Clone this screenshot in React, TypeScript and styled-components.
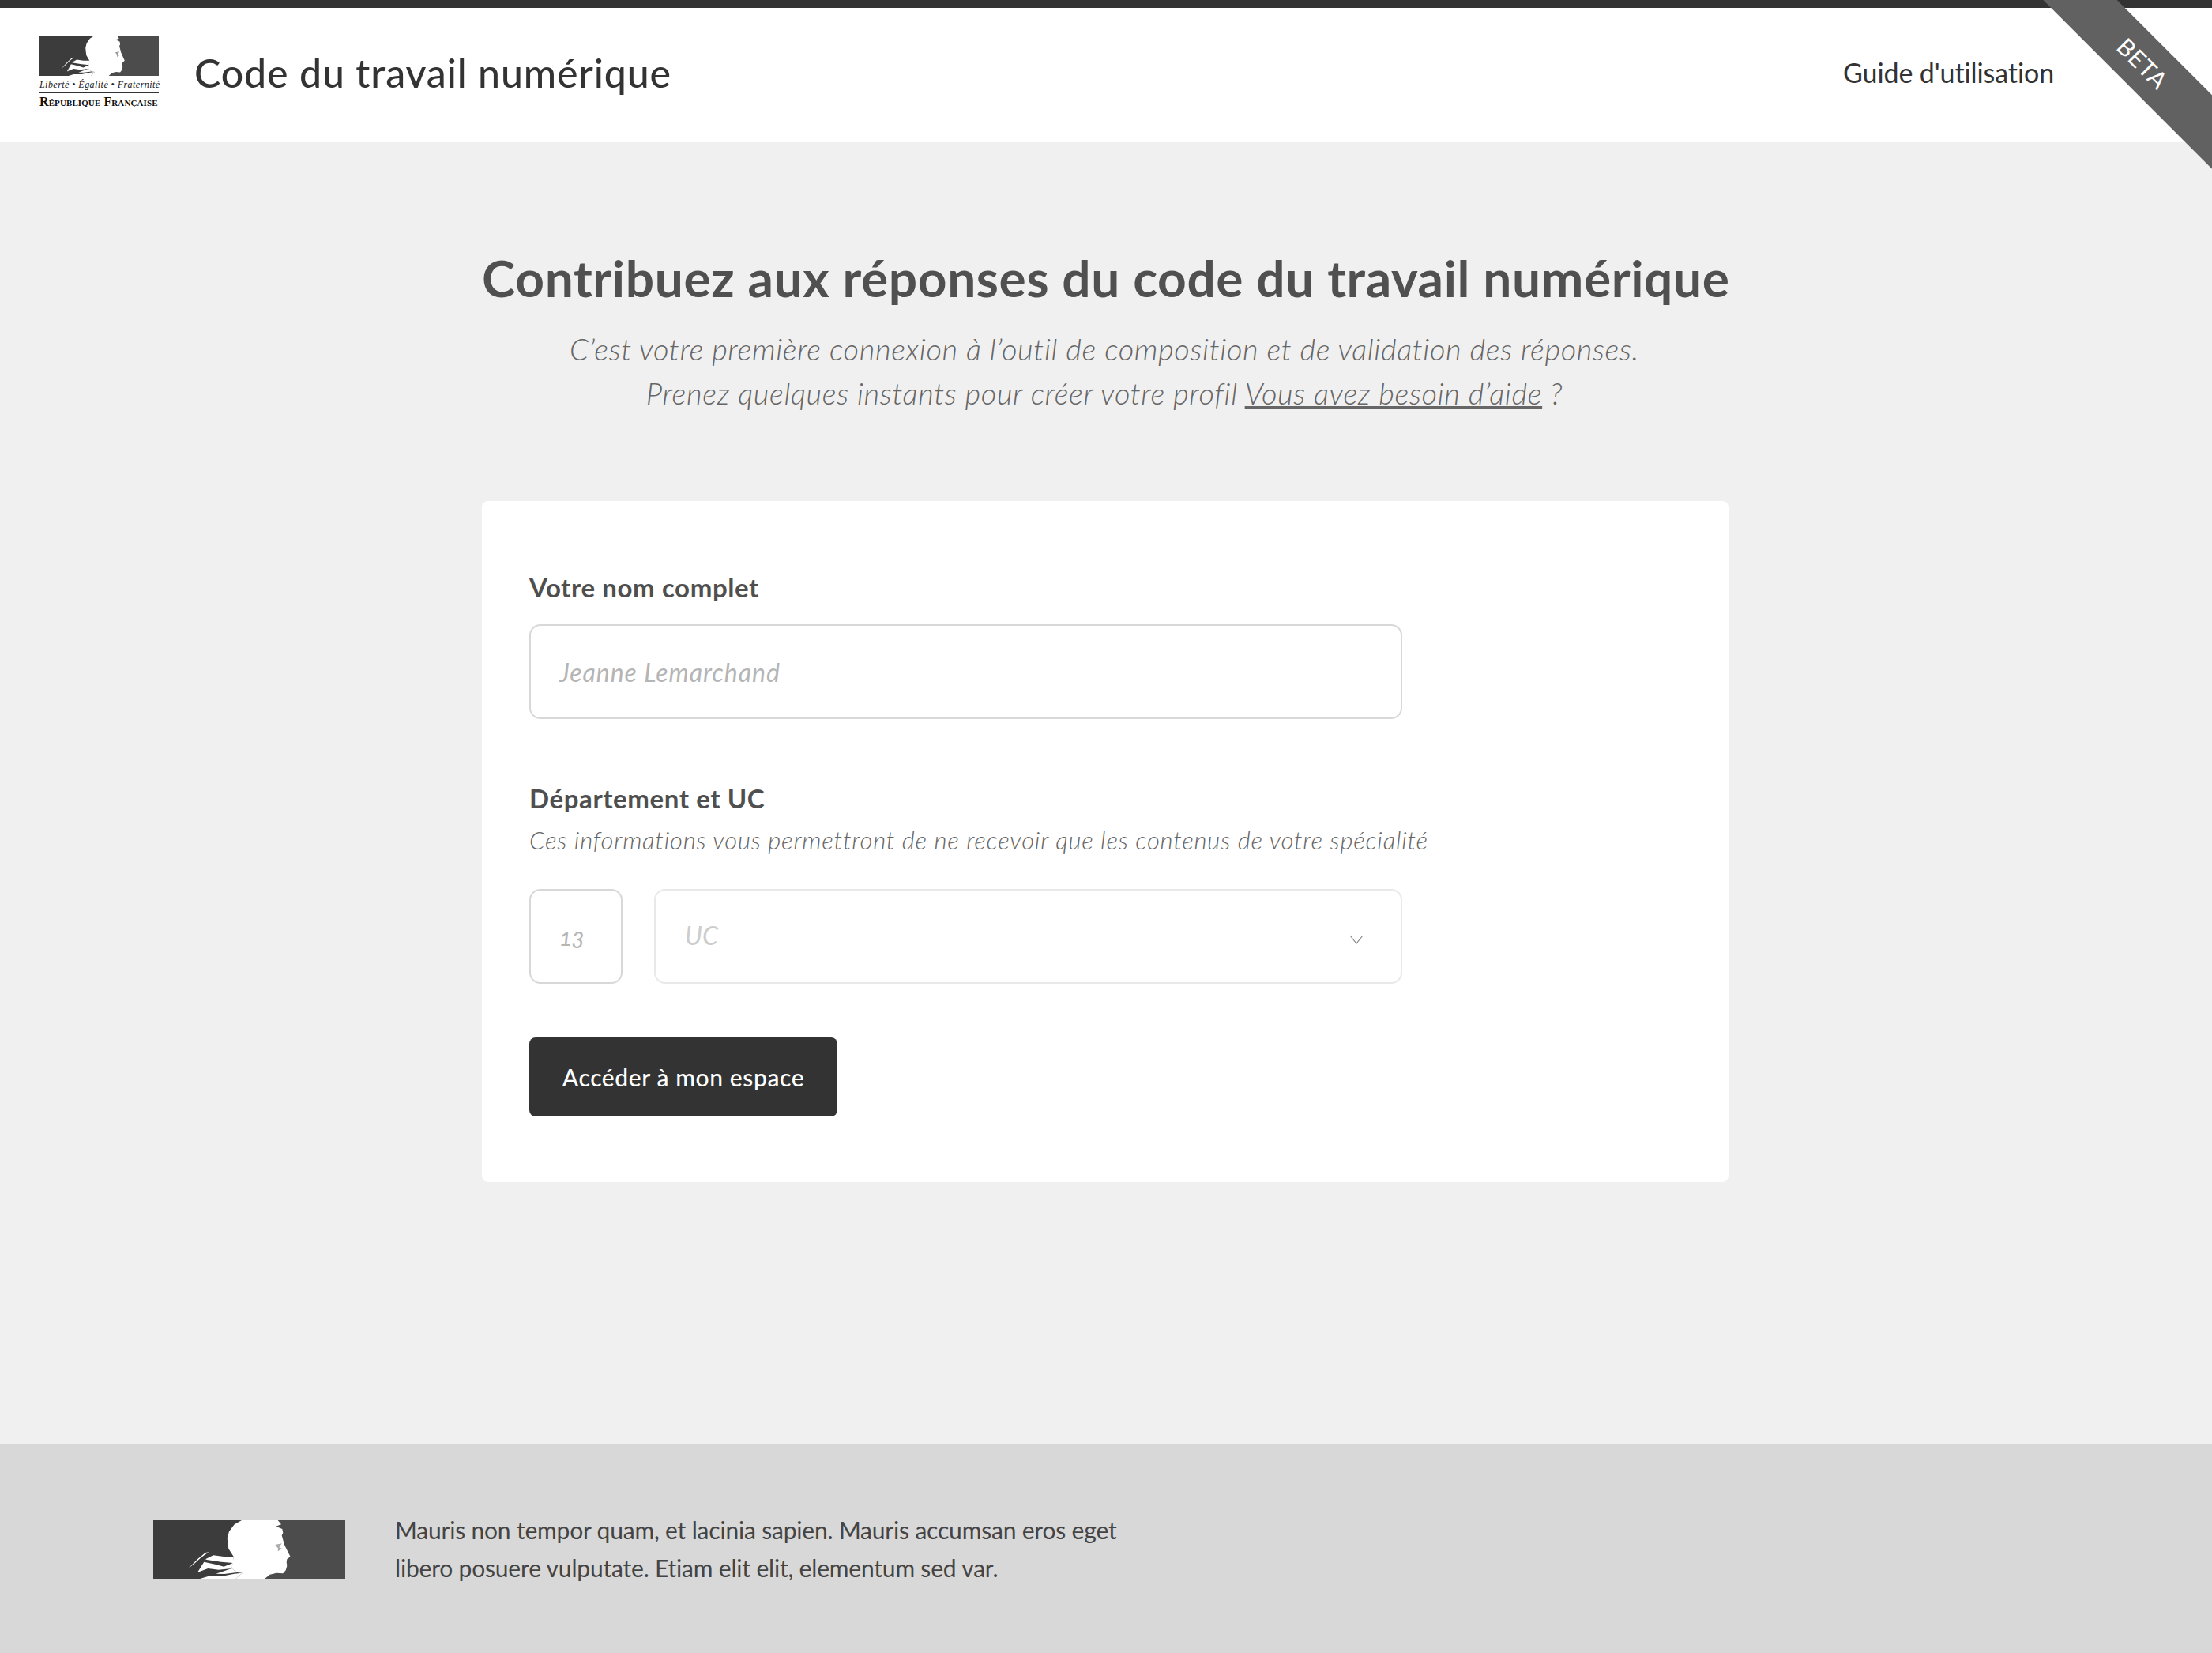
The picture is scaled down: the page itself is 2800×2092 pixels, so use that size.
import React from 'react';
import styled, { createGlobalStyle } from 'styled-components';

const FONT = `Lato, 'Open Sans', sans-serif`;

const GlobalStyle = createGlobalStyle`
	html, body {
		margin: 0;
		padding: 0;
		background: #f0f0f0;
		font-family: ${FONT};
	}
	* {
		box-sizing: border-box;
	}
`;

const Page = styled.div`
	position: relative;
	display: flex;
	flex-direction: column;
	width: 2800px;
	height: 2092px;
	overflow: hidden;
`;

const Header = styled.header`
	display: flex;
	align-items: center;
	height: 180px;
	padding-left: 50px;
	background: #fff;
	border-top: 10px solid #333;
`;

const HeaderLogo = styled.div`
	display: flex;
	flex-direction: column;
	width: 151px;
	margin-top: -8px;
	margin-right: 45px;
`;

const Motto = styled.div`
	margin-top: 4px;
	padding-bottom: 3px;
	border-bottom: 1.5px solid #333;
	font-family: 'Liberation Serif', serif;
	font-style: italic;
	font-size: 12px;
	line-height: 14px;
	letter-spacing: 0.45px;
	white-space: nowrap;
	color: #222;
`;

const Republic = styled.div`
	margin-top: 3px;
	font-family: 'Liberation Serif', serif;
	font-size: 16px;
	font-weight: 700;
	line-height: 16px;
	font-variant: small-caps;
	letter-spacing: 0.1px;
	white-space: nowrap;
	color: #111;
`;

const SiteTitle = styled.h2`
	flex: 1;
	margin: -7px 0 0;
	font-size: 50px;
	font-weight: 500;
	letter-spacing: 0.9px;
	color: #333;
`;

const NavLink = styled.a`
	margin: -7px 200px 0 0;
	font-size: 34px;
	letter-spacing: -0.1px;
	color: #333;
`;

const Ribbon = styled.div`
	position: absolute;
	top: 0;
	right: 0;
	width: 300px;
	height: 240px;
	overflow: hidden;
`;

const RibbonBand = styled.div`
	position: absolute;
	top: 45px;
	left: 11px;
	width: 400px;
	height: 66px;
	padding-left: 5px;
	line-height: 66px;
	text-align: center;
	transform: rotate(45deg);
	background: #616161;
	color: #fff;
	font-size: 30px;
	font-weight: 400;
	letter-spacing: 1px;
`;

const Main = styled.main`
	flex: 1;
	padding-top: 136px;
	background: #f0f0f0;
`;

const Column = styled.div`
	width: 1578px;
	margin-left: 610px;
`;

const Title = styled.h1`
	margin: 0 2px 0 0;
	font-size: 64px;
	line-height: 72px;
	font-weight: 700;
	letter-spacing: 0.62px;
	text-align: center;
	white-space: nowrap;
	color: #505050;
`;

const Intro = styled.p`
	margin: 25px 2px 109px 0;
	font-size: 38px;
	font-style: italic;
	font-weight: 300;
	line-height: 56px;
	letter-spacing: 0.62px;
	text-align: center;
	color: #666;

	a {
		color: inherit;
		text-decoration: underline;
	}
`;

const Card = styled.form`
	height: 862px;
	padding: 89px 60px 0;
	background: #fff;
	border-radius: 8px;
`;

const Label = styled.label<{ $gap: number }>`
	display: block;
	margin-bottom: ${(p) => p.$gap}px;
	font-size: 33px;
	font-weight: 700;
	line-height: 40px;
	letter-spacing: 0.6px;
	color: #4f4f4f;
`;

const Hint = styled.div`
	margin-bottom: 42px;
	font-size: 31px;
	font-style: italic;
	font-weight: 300;
	line-height: 40px;
	letter-spacing: 0.79px;
	white-space: nowrap;
	color: #666;
`;

const TextInput = styled.input<{ $width: number }>`
	display: block;
	width: ${(p) => p.$width}px;
	height: 120px;
	padding: 0 36px;
	border: 2px solid #d8d8d8;
	border-radius: 14px;
	background: #fff;
	outline: none;
	font-family: ${FONT};
	font-size: 32px;
	font-style: italic;
	letter-spacing: 0.95px;

	&::placeholder {
		color: #b5b5b5;
		opacity: 1;
	}
`;

const NameField = styled(TextInput)`
	margin-bottom: 80px;
`;

const DepartmentField = styled(TextInput)`
	font-size: 30px;
	letter-spacing: -0.5px;
	font-variant-numeric: oldstyle-nums;
`;

const FieldRow = styled.div`
	display: flex;
	gap: 40px;
	width: 1105px;
	margin-bottom: 68px;
`;

const UcSelect = styled.div`
	display: flex;
	flex: 1;
	align-items: center;
	justify-content: space-between;
	height: 120px;
	padding: 0 47px 0 37px;
	border: 2px solid #e9e9e9;
	border-radius: 14px;
	font-size: 32px;
	font-style: italic;
	color: #cdcdcd;
`;

const UcText = styled.span`
	margin-top: -4px;
`;

const Chevron = styled.svg`
	margin-top: 7px;
`;

const SubmitButton = styled.button`
	display: block;
	width: 390px;
	height: 100px;
	border: 0;
	border-radius: 8px;
	background: #333;
	color: #fff;
	font-family: ${FONT};
	font-size: 30px;
	font-weight: 500;
	letter-spacing: 0.6px;
`;

const Footer = styled.footer`
	display: flex;
	align-items: flex-start;
	gap: 63px;
	height: 264px;
	padding: 84px 0 0 194px;
	background: #d8d8d8;
`;

const FooterLogo = styled.div`
	margin-top: 12px;
	line-height: 0;
`;

const FooterText = styled.p`
	margin: 0;
	font-size: 30px;
	font-weight: 400;
	line-height: 48px;
	letter-spacing: -0.19px;
	color: #444;
`;

const Marianne: React.FC<{ width: number; height: number; eye: string }> = ({ width, height, eye }) => (
	<svg width={width} height={height} viewBox='0 0 243 74' preserveAspectRatio='none'>
		<rect width='243' height='74' fill='#3c3c3c' />
		<rect x='130' width='113' height='74' fill='#4c4c4c' />
		{/* head and neck */}
		<path
			fill='#fff'
			d='M112 0 L157.7 0 L162 5.3 L155.3 7.7 L163.3 11 L164.3 16 L162.7 19.3 L166 31 L169.3 37.7 L173.5 46 L169.3 49.3 L168.7 52.7 L169.3 57.7 L167.7 63.3 L164.3 67.3 L156 66.7 L147.7 68.7 L141 74 L104.3 74 L112.7 66.7 L106 66 L99.3 61 L101 51 L101.7 46 L95.3 36 L93.7 22.7 L96 14.3 L102.7 5.3 Z'
		/>
		{/* hair strands */}
		<path fill='#fff' d='M44.3 61 L56 49.3 L66 41 L70.3 40.3 L61 46.7 L52.7 54.3 Z' />
		<path fill='#fff' d='M66 49.3 L76 44.3 L89.3 46 L101.7 46 L101 54 L86 52.7 L67.7 50 Z' />
		<path fill='#fff' d='M64.3 52.7 L79.3 56 L89.3 58.7 L101 54 L99.3 61 L82.7 62.7 L69.3 61 L56 66 Z' />
		<path fill='#fff' d='M59.3 74 L69.3 71 L86 71 L102.7 67.7 L112.7 66.7 L104.3 74 Z' />
		<path fill='#fff' d='M79.3 67.7 L99.3 61 L106 66 L90 68 Z' />
		<path fill={eye} d='M154.3 31 L162.7 29.3 L159.3 34.3 L163.3 36 L157.7 39.3 L158 35.5 Z' />
	</svg>
);

const App: React.FC = () => (
	<Page>
		<GlobalStyle />
		<Header>
			<HeaderLogo>
				<Marianne width={151} height={51} eye='#999' />
				<Motto>Liberté • Égalité • Fraternité</Motto>
				<Republic>République Française</Republic>
			</HeaderLogo>
			<SiteTitle>Code du travail numérique</SiteTitle>
			<NavLink>Guide d'utilisation</NavLink>
		</Header>
		<Ribbon>
			<RibbonBand>BETA</RibbonBand>
		</Ribbon>
		<Main>
			<Column>
				<Title>Contribuez aux réponses du code du travail numérique</Title>
				<Intro>
					C’est votre première connexion à l’outil de composition et de validation des réponses.
					<br />
					Prenez quelques instants pour créer votre profil <a>Vous avez besoin d’aide</a> ?
				</Intro>
				<Card>
					<Label $gap={27}>Votre nom complet</Label>
					<NameField $width={1105} placeholder='Jeanne Lemarchand' />
					<Label $gap={13}>Département et UC</Label>
					<Hint>Ces informations vous permettront de ne recevoir que les contenus de votre spécialité</Hint>
					<FieldRow>
						<DepartmentField $width={118} placeholder='13' />
						<UcSelect>
							<UcText>UC</UcText>
							<Chevron width='18' height='12' viewBox='0 0 18 12'>
								<path d='M1 1 L9 11 L17 1' fill='none' stroke='#808080' strokeWidth='1.1' />
							</Chevron>
						</UcSelect>
					</FieldRow>
					<SubmitButton type='button'>Accéder à mon espace</SubmitButton>
				</Card>
			</Column>
		</Main>
		<Footer>
			<FooterLogo>
				<Marianne width={243} height={74} eye='#aaa' />
			</FooterLogo>
			<FooterText>
				Mauris non tempor quam, et lacinia sapien. Mauris accumsan eros eget
				<br />
				libero posuere vulputate. Etiam elit elit, elementum sed var.
			</FooterText>
		</Footer>
	</Page>
);

export default App;
